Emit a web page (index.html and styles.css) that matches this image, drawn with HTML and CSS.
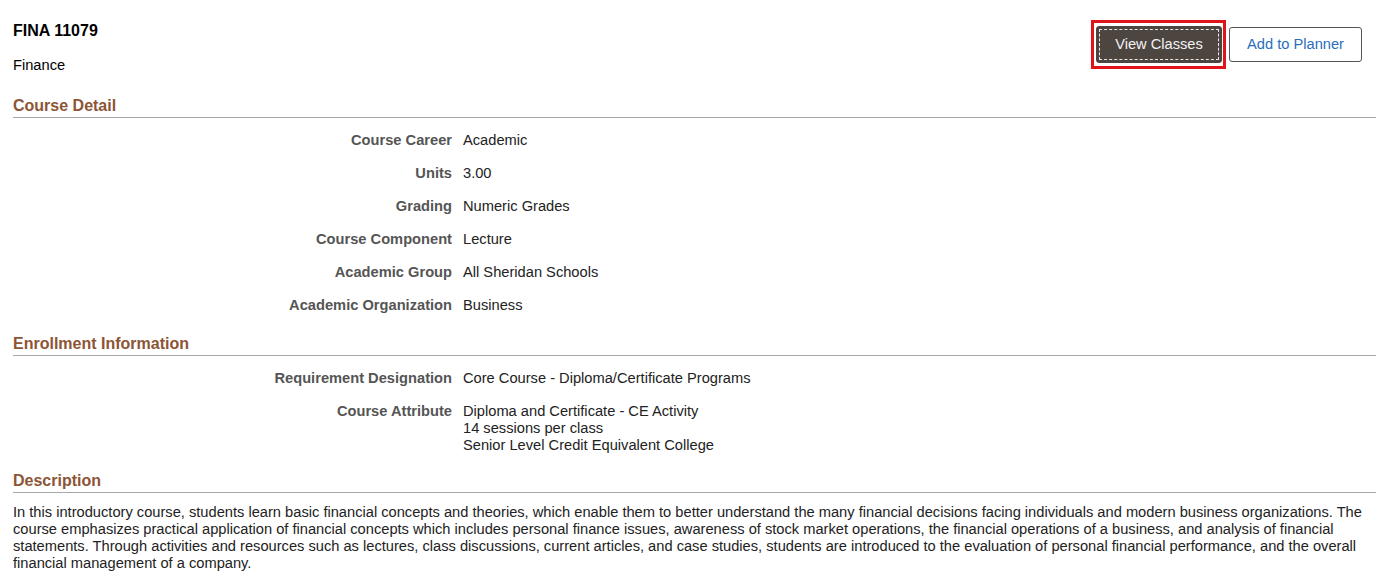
FILE: index.html
```html
<!DOCTYPE html>
<html>
<head>
<meta charset="utf-8">
<link rel="stylesheet" href="styles.css">
</head>
<body>
<div class="page">
  <div class="top">
    <div class="titles">
      <div class="code">FINA 11079</div>
      <div class="name">Finance</div>
    </div>
    <div class="actions">
      <span class="focus-ring"><button class="btn btn-primary"><span class="focus">View Classes</span></button></span>
      <button class="btn btn-secondary">Add to Planner</button>
    </div>
  </div>

  <div class="section">
    <div class="sec-head">Course Detail</div>
    <div class="fields">
      <div class="label">Course Career</div><div class="value">Academic</div>
      <div class="label">Units</div><div class="value">3.00</div>
      <div class="label">Grading</div><div class="value">Numeric Grades</div>
      <div class="label">Course Component</div><div class="value">Lecture</div>
      <div class="label">Academic Group</div><div class="value">All Sheridan Schools</div>
      <div class="label">Academic Organization</div><div class="value">Business</div>
    </div>
  </div>

  <div class="section">
    <div class="sec-head">Enrollment Information</div>
    <div class="fields">
      <div class="label">Requirement Designation</div><div class="value">Core Course - Diploma/Certificate Programs</div>
      <div class="label">Course Attribute</div><div class="value">Diploma and Certificate - CE Activity<br>14 sessions per class<br>Senior Level Credit Equivalent College</div>
    </div>
  </div>

  <div class="section">
    <div class="sec-head">Description</div>
    <p class="desc">In this introductory course, students learn basic financial concepts and theories, which enable them to better understand the many financial decisions facing individuals and modern business organizations. The course emphasizes practical application of financial concepts which includes personal finance issues, awareness of stock market operations, the financial operations of a business, and analysis of financial statements. Through activities and resources such as lectures, class discussions, current articles, and case studies, students are introduced to the evaluation of personal financial performance, and the overall financial management of a company.</p>
  </div>
</div>
</body>
</html>
```

FILE: styles.css
```css
html, body {
  margin: 0;
  padding: 0;
  background: #ffffff;
}
body {
  font-family: "Liberation Sans", Arial, sans-serif;
  font-size: 14.67px;
  line-height: 17px;
  color: #222222;
}
.page {
  padding: 22px 2px 0 13px;
}
.top {
  display: flex;
  justify-content: space-between;
  align-items: flex-start;
}
.code {
  font-size: 16px;
  font-weight: bold;
  line-height: 18px;
  color: #000000;
}
.name {
  margin-top: 17px;
  color: #000000;
}
.actions {
  display: flex;
  gap: 3px;
  margin-right: 14px;
  margin-top: -2px;
  align-items: center;
}
.focus-ring {
  display: block;
  border: 3px solid #e0141b;
  padding: 3px 1px 3px 2px;
}
.btn {
  display: block;
  font-family: "Liberation Sans", Arial, sans-serif;
  font-size: 14.67px;
  line-height: 17px;
  border-radius: 3px;
  cursor: pointer;
  box-sizing: border-box;
}
.btn-primary {
  background: #4d4540;
  color: #f2f2f2;
  border: 1px solid #4d4540;
  padding: 2px;
  height: 37px;
  width: 126px;
}
.btn-primary .focus {
  display: block;
  height: 31px;
  line-height: 29px;
  border: 1px dashed #e8e8e8;
  box-sizing: border-box;
}
.btn-secondary {
  background: #ffffff;
  color: #2a6ebb;
  border: 1px solid #555555;
  height: 35px;
  width: 133px;
  padding: 0;
}
.top + .section {
  margin-top: 23px;
}
.sec-head {
  font-size: 16px;
  font-weight: bold;
  line-height: 18px;
  color: #8c5535;
  padding-bottom: 2px;
  border-bottom: 1px solid #a8a8a8;
}
.fields {
  display: grid;
  grid-template-columns: 439px 1fr;
  column-gap: 11px;
  row-gap: 16px;
  padding-top: 14px;
}
.label {
  text-align: right;
  font-weight: bold;
  color: #555555;
}
.value {
  color: #222222;
}
.section + .section {
  margin-top: 21px;
}
.section:last-child {
  margin-top: 18px;
}
.desc {
  margin: 11px 0 0 0;
  color: #222222;
}
```
